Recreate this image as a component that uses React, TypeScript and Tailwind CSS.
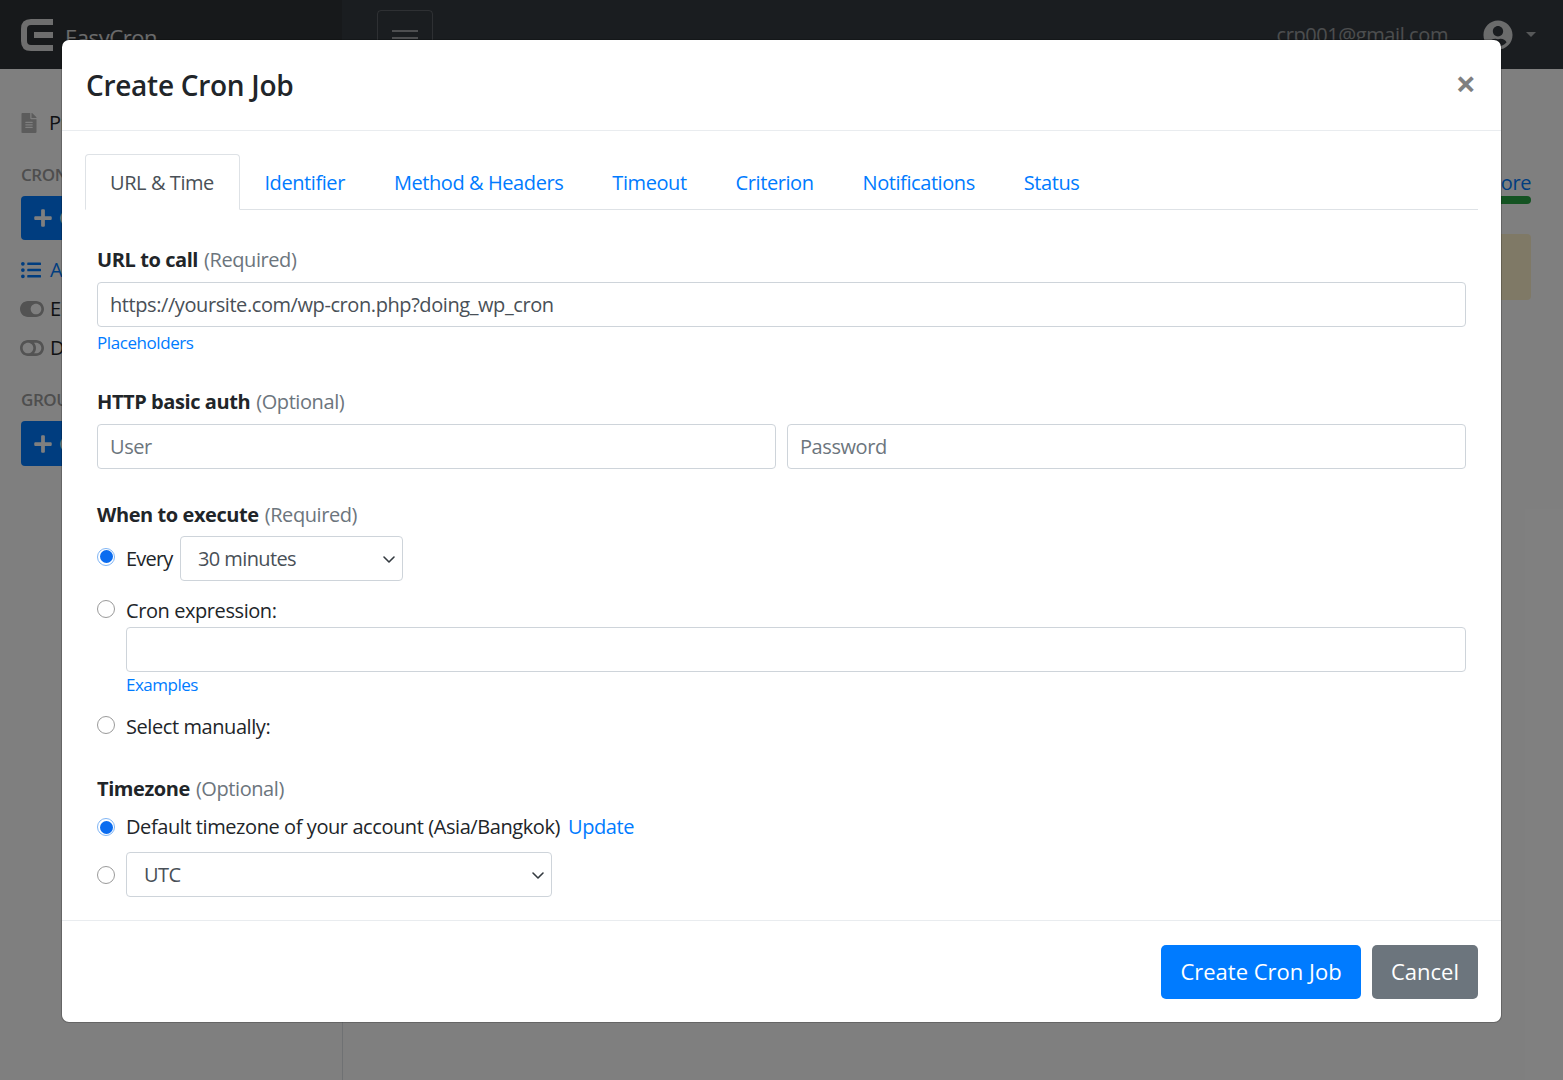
import { FaFileAlt, FaListUl, FaPlus, FaToggleOff, FaToggleOn, FaUserCircle } from "react-icons/fa";

const Label = ({ title, hint }: { title: string; hint: string }) => (
  <div className="flex h-[24px] items-center gap-[6px] leading-[24px]">
    <span className="font-bold text-[#212529]">{title}</span>
    <span className="font-normal text-[#6c757d]">{hint}</span>
  </div>
);

const Field = ({ value, placeholder, className }: { value?: string; placeholder?: string; className?: string }) => (
  <input
    readOnly
    value={value}
    placeholder={placeholder}
    className={`h-[45px] min-w-0 rounded-[4px] border border-[#ced4da] bg-white px-3 text-[#495057] outline-none placeholder:text-[#6c757d] ${className ?? ""}`}
  />
);

const Select = ({ value, className }: { value: string; className: string }) => (
  <div className={`flex h-[45px] items-center justify-between rounded-[4px] border border-[#ced4da] bg-white pl-[17px] pr-[6px] text-[#495057] ${className}`}>
    <span className="tracking-[-0.03em]">{value}</span>
    <svg width="14" height="14" viewBox="0 0 14 14" fill="none" stroke="#343a40" strokeWidth="1.6" strokeLinecap="round" strokeLinejoin="round">
      <path d="M2 5l5 5 5-5" />
    </svg>
  </div>
);

const Radio = ({ checked, className }: { checked?: boolean; className?: string }) =>
  checked ? (
    <span className={`flex h-[18px] w-[18px] shrink-0 items-center justify-center rounded-full border border-[#7fb5f5] bg-white ${className ?? ""}`}>
      <span className="h-[13px] w-[13px] rounded-full bg-[#0a6cf0]" />
    </span>
  ) : (
    <span className={`h-[18px] w-[18px] shrink-0 rounded-full border border-[#9a9a9a] bg-white ${className ?? ""}`} />
  );

const tabs = ["Identifier", "Method & Headers", "Timeout", "Criterion", "Notifications", "Status"];

const App = () => {
  return (
    <div className="relative h-[1080px] w-[1563px] overflow-hidden bg-white font-['Open_Sans','Noto_Sans',sans-serif] text-[20px] tracking-[-0.021em] text-[#212529]">
      {/* page behind the dialog */}
      <header className="flex h-[69px] items-center bg-[#343a40]">
        <div className="flex h-full w-[342px] items-center gap-[12px] bg-[#2f3237] pl-[21px]">
          <svg width="32" height="32" viewBox="0 0 32 32" fill="none" stroke="#dcdcdc" strokeWidth="6">
            <path d="M32 3H10Q3 3 3 10V22Q3 29 10 29H32" />
            <path d="M13 16H32" />
          </svg>
          <span className="mt-[6px] text-[22px] text-white/80">EasyCron</span>
        </div>
        <button className="ml-[35px] mt-[6px] flex h-[56px] w-[56px] flex-col items-center justify-center gap-[5px] rounded-[4px] border border-white/20">
          <span className="h-[2px] w-[26px] bg-white/50" />
          <span className="h-[2px] w-[26px] bg-white/50" />
          <span className="h-[2px] w-[26px] bg-white/50" />
        </button>
        <div className="ml-auto flex items-center pr-[27px]">
          <span className="mt-[1px] text-white/50">crp001@gmail.com</span>
          <FaUserCircle className="ml-[35px] text-[30px] text-white/80" />
          <span className="ml-[13px] h-0 w-0 border-x-[5px] border-t-[5px] border-x-transparent border-t-white/60" />
        </div>
      </header>
      <div className="flex h-[1011px]">
        <aside className="flex w-[343px] flex-col border-r border-[#dee2e6] pl-[21px] pt-[42px]">
          <div className="flex h-[24px] items-center gap-[10px]">
            <FaFileAlt className="-ml-[2px] text-[20px] text-[#b8b8b8]" />
            <span>Profile</span>
          </div>
          <p className="mt-[27px] text-[17px] font-semibold text-[#9c9c9c]">CRON JOBS</p>
          <div className="mt-[8px] flex h-[44px] w-[180px] items-center gap-[6px] rounded-[4px] bg-[#007bff] pl-[12px] text-white">
            <FaPlus />
            <span>Create</span>
          </div>
          <div className="mt-[18px] flex h-[24px] items-center gap-[9px] text-[#007bff]">
            <FaListUl className="text-[20px]" />
            <span>All</span>
          </div>
          <div className="mt-[15px] flex h-[24px] items-center gap-[6px]">
            <FaToggleOn className="-ml-px text-[24px] text-[#a6a6a6]" />
            <span>Enabled</span>
          </div>
          <div className="mt-[15px] flex h-[24px] items-center gap-[6px]">
            <FaToggleOff className="-ml-px text-[24px] text-[#a6a6a6]" />
            <span>Dis.</span>
          </div>
          <p className="mt-[27px] text-[17px] font-semibold text-[#9c9c9c]">GROUPS</p>
          <div className="mt-[9px] flex h-[45px] w-[180px] items-center gap-[6px] rounded-[4px] bg-[#007bff] pl-[12px] text-white">
            <FaPlus />
            <span>Create</span>
          </div>
        </aside>
        <main className="flex flex-1 flex-col items-end pr-[32px] pt-[99px]">
          <span className="text-[#007bff]">More</span>
          <div className="-mt-[2px] h-[8px] w-[200px] rounded-full bg-[#28a745]" />
          <div className="mt-[30px] h-[66px] w-[300px] rounded-[4px] bg-[#fff3cd]" />
        </main>
      </div>

      {/* backdrop and dialog */}
      <div className="absolute inset-0 bg-black/50" />
      <div className="absolute left-[61px] top-[39px] flex h-[984px] w-[1441px] flex-col rounded-[8px] border border-black/20 bg-white bg-clip-padding">
        <div className="flex h-[91px] shrink-0 items-center justify-between border-b border-[#e9ecef] pl-[24px] pr-[25px]">
          <h5 className="text-[28px] font-semibold leading-[34px] tracking-[-0.01em] text-[#212529]">Create Cron Job</h5>
          <span className="-mt-[2px] text-[36px] font-bold leading-none tracking-normal text-black/50">×</span>
        </div>
        <div className="flex-1 pl-[23px] pr-[23px] pt-[23px]">
          <nav className="flex h-[56px] border-b border-[#dee2e6]">
            <a className="-mb-px flex h-[56px] items-center rounded-t-[4px] border border-[#dee2e6] border-b-white pl-[24px] pr-[25px] pt-[2px] text-[#495057]">URL &amp; Time</a>
            {tabs.map((t) => (
              <a key={t} className="flex items-center px-[24.5px] pt-[2px] text-[#007bff]">{t}</a>
            ))}
          </nav>
          <form className="flex flex-col px-[12px] pt-[38px]">
            <Label title="URL to call" hint="(Required)" />
            <Field className="mt-[10px]" value="https://yoursite.com/wp-cron.php?doing_wp_cron" />
            <a className="mt-[4px] h-[24px] text-[17px] leading-[24px] text-[#007bff]">Placeholders</a>
            <div className="mt-[35px]"><Label title="HTTP basic auth" hint="(Optional)" /></div>
            <div className="mt-[10px] flex gap-[11px]">
              <Field className="flex-1" placeholder="User" />
              <Field className="flex-1" placeholder="Password" />
            </div>
            <div className="mt-[34px]"><Label title="When to execute" hint="(Required)" /></div>
            <div className="mt-[9px] flex h-[45px] items-center">
              <Radio checked className="-mt-[4px]" />
              <span className="ml-[11px] w-[47px] tracking-[-0.04em]">Every</span>
              <Select className="ml-[7px] w-[223px]" value="30 minutes" />
            </div>
            <div className="mt-[18px] flex h-[24px] items-center">
              <Radio className="-mt-[5px]" />
              <span className="ml-[11px]">Cron expression:</span>
            </div>
            <div className="pl-[29px]">
              <Field className="mt-[4px] w-full" />
              <a className="mt-[1px] block h-[24px] text-[17px] leading-[24px] tracking-[-0.03em] text-[#007bff]">Examples</a>
            </div>
            <div className="mt-[18px] flex h-[24px] items-center">
              <Radio className="-mt-[4px]" />
              <span className="ml-[11px]">Select manually:</span>
            </div>
            <div className="mt-[38px]"><Label title="Timezone" hint="(Optional)" /></div>
            <div className="mt-[14px] flex h-[24px] items-center">
              <Radio checked />
              <span className="ml-[11px]">Default timezone of your account (Asia/Bangkok)</span>
              <a className="ml-[8px] text-[#007bff]">Update</a>
            </div>
            <div className="mt-[13px] flex h-[45px] items-center">
              <Radio />
              <Select className="ml-[11px] w-[426px]" value="UTC" />
            </div>
          </form>
        </div>
        <div className="flex h-[102px] shrink-0 items-center justify-end gap-[11px] border-t border-[#e9ecef] pr-[23px]">
          <button className="h-[54px] w-[200px] rounded-[5px] bg-[#007bff] text-[22px] tracking-normal text-white">Create Cron Job</button>
          <button className="h-[54px] w-[106px] rounded-[5px] bg-[#6c757d] text-[22px] tracking-normal text-white">Cancel</button>
        </div>
      </div>
    </div>
  );
};

export default App;
